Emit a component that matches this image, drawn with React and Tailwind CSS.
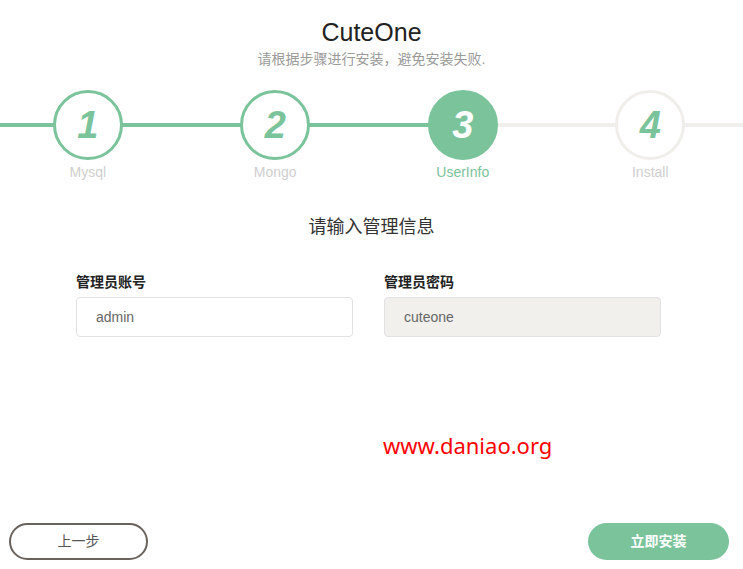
import React from "react";

function Step({ n, label, state, leftGreen, rightGreen }) {
  const active = state === "active";
  const done = state === "done";
  return (
    <div className="relative flex flex-1 flex-col items-center">
      <div
        className={`absolute left-0 top-[33px] h-[4px] w-1/2 ${leftGreen ? "bg-[#7ac39b]" : "bg-[#f0efec]"}`}
      />
      <div
        className={`absolute right-0 top-[33px] h-[4px] w-1/2 ${rightGreen ? "bg-[#7ac39b]" : "bg-[#f0efec]"}`}
      />
      <div
        className={`relative z-10 flex h-[70px] w-[70px] items-center justify-center rounded-full border-[3px] ${
          active
            ? "border-[#7ac39b] bg-[#7ac39b] text-white"
            : done
            ? "border-[#7ac39b] bg-white text-[#7ac39b]"
            : "border-[#efeeea] bg-white text-[#7ac39b]"
        }`}
      >
        <span className="text-[38px] font-bold italic leading-none [font-family:'Liberation_Sans',Arial,sans-serif]">
          {n}
        </span>
      </div>
      <div
        className={`mt-[3px] text-[14px] leading-[19px] ${active ? "text-[#7ac39b]" : "text-[#cfcfcf]"}`}
      >
        {label}
      </div>
    </div>
  );
}

export default function App() {
  return (
    <div className="h-[569px] w-[743px] overflow-hidden bg-white [font-family:'Liberation_Sans','Noto_Sans_CJK_SC',sans-serif]">
      <div className="mt-[17px] text-center text-[25px] leading-[30px] text-[#222]">CuteOne</div>
      <div className="mt-[2px] text-center text-[14px] leading-[20px] text-[#9a9a9a]">
        请根据步骤进行安装，避免安装失败.
      </div>

      <div className="mt-[21px] overflow-hidden">
        <div className="-ml-[6px] flex w-[750px]">
          <Step n="1" label="Mysql" state="done" leftGreen rightGreen />
          <Step n="2" label="Mongo" state="done" leftGreen rightGreen />
          <Step n="3" label="UserInfo" state="active" leftGreen rightGreen={false} />
          <Step n="4" label="Install" state="todo" leftGreen={false} rightGreen={false} />
        </div>
      </div>

      <div className="mt-[33px] text-center text-[18px] leading-[24px] text-[#333]">请输入管理信息</div>

      <div className="ml-[76px] mt-[33px] grid w-[585px] grid-cols-2 gap-x-[31px]">
        <div>
          <div className="text-[14px] font-bold leading-[20px] text-[#222]">管理员账号</div>
          <div className="mt-[5px] flex h-[40px] items-center rounded-[4px] border border-[#e2e2e2] bg-white pl-[19px] text-[14px] text-[#666]">
            admin
          </div>
        </div>
        <div>
          <div className="text-[14px] font-bold leading-[20px] text-[#222]">管理员密码</div>
          <div className="mt-[5px] flex h-[40px] items-center rounded-[4px] border border-[#e2e2e2] bg-[#f1f0ed] pl-[19px] text-[14px] text-[#666]">
            cuteone
          </div>
        </div>
      </div>

      <div className="ml-[383px] mt-[93px] text-[22px] leading-[30px] text-[#ff0000] [font-family:'Noto_Sans','Liberation_Sans',sans-serif]">
        www.daniao.org
      </div>

      <div className="mt-[63px] flex items-center justify-between pl-[9px] pr-[14px]">
        <button className="flex h-[37px] w-[139px] items-center justify-center rounded-full border-2 border-[#69625d] bg-white text-[14px] text-[#555]">
          上一步
        </button>
        <button className="flex h-[37px] w-[141px] items-center justify-center rounded-full bg-[#7ac39b] text-[14px] font-bold text-white">
          立即安装
        </button>
      </div>
    </div>
  );
}
